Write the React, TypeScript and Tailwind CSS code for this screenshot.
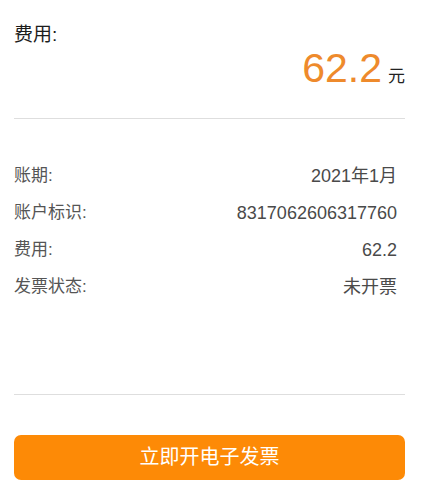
import React from "react";

const rows = [
  { label: "账期:", value: "2021年1月" },
  { label: "账户标识:", value: "8317062606317760" },
  { label: "费用:", value: "62.2" },
  { label: "发票状态:", value: "未开票" },
];

export default function App() {
  return (
    <div
      className="w-[421px] h-[500px] bg-white pl-[14px] pr-[16px] overflow-hidden"
      style={{ fontFamily: '"Liberation Sans", "Noto Sans CJK SC", sans-serif' }}
    >
      {/* amount header */}
      <div className="pt-[23px] pb-[28px] border-b border-[#dedede]">
        <div className="text-[19px] leading-[24px] text-[#1c1c1c]">费用:</div>
        <div className="flex items-baseline justify-end mt-[1px]">
          <span className="text-[41px] leading-[40px] text-[#ee8a2c]">62.2</span>
          <span className="ml-[6px] text-[17px] text-[#222]">元</span>
        </div>
      </div>

      {/* bill details */}
      <div className="pt-[45px] pb-[94px] border-b border-[#dedede] flex flex-col gap-[12px]">
        {rows.map((r) => (
          <div key={r.label} className="flex justify-between items-center h-[25px] pr-[8px]">
            <span className="text-[17px] text-[#555]">{r.label}</span>
            <span className="text-[18px] text-[#4a4a4a]">{r.value}</span>
          </div>
        ))}
      </div>

      <button className="mt-[40px] w-full h-[45px] rounded-[7px] bg-[#fd8a06] text-white text-[20px]">
        立即开电子发票
      </button>
    </div>
  );
}
